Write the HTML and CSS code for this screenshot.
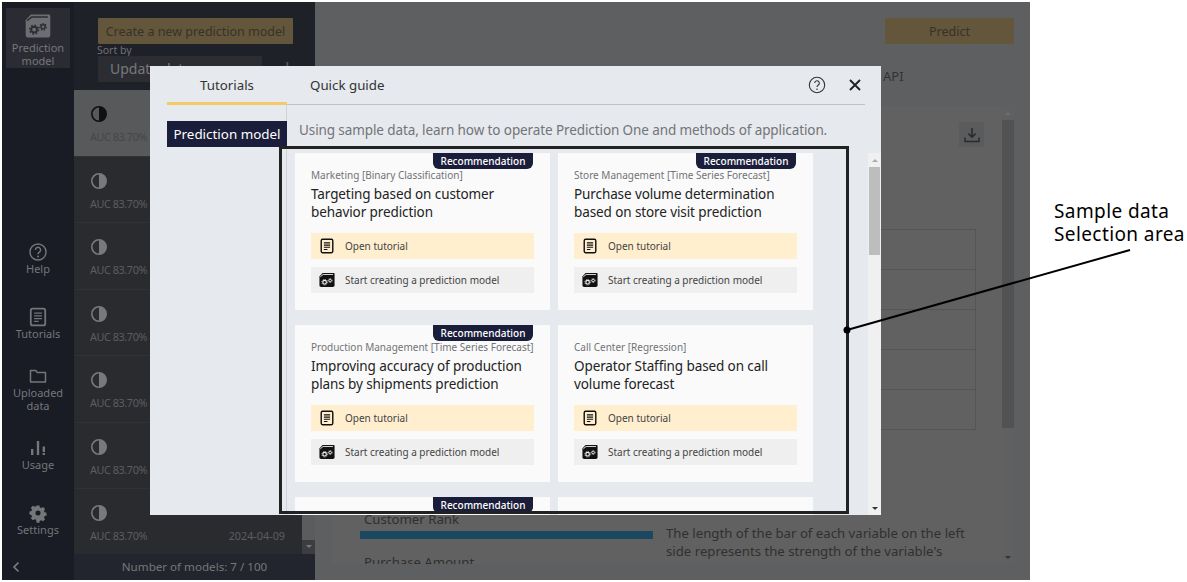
FILE: index.html
```html
<!DOCTYPE html>
<html lang="en">
<head>
<meta charset="utf-8" />
<meta name="viewport" content="width=device-width, initial-scale=1" />
<title>Prediction One</title>
<link rel="stylesheet" href="styles.css">
</head>
<body>
<svg class="sprites" width="0" height="0" aria-hidden="true">
  <symbol id="i-half" viewBox="0 0 18 18">
    <circle cx="9" cy="9" r="7.2" fill="none" stroke="currentColor" stroke-width="1.6"/>
    <path d="M9 1.8a7.2 7.2 0 0 1 0 14.4z" fill="currentColor"/>
  </symbol>
  <symbol id="i-doc" viewBox="0 0 18 18">
    <rect x="2.5" y="1.5" width="13" height="15" rx="1.5" fill="none" stroke="currentColor" stroke-width="1.6"/>
    <path d="M5.5 5.5h7M5.5 8h7M5.5 10.5h7M5.5 13h4" stroke="currentColor" stroke-width="1.2" fill="none"/>
  </symbol>
  <symbol id="i-box" viewBox="0 0 18 18">
    <path d="M4 1h12.5a1 1 0 0 1 1 1v13a2 2 0 0 1-2 2H2.5a2 2 0 0 1-2-2V5z" fill="currentColor"/>
    <path d="M1.5 5.4 4.6 2.800h11.2" fill="none" stroke="var(--box-line)" stroke-width="1"/>
    <circle cx="6.300" cy="11.500" r="2" fill="none" stroke="var(--box-line)" stroke-width="1.300"/>
    <circle cx="6.300" cy="11.500" r="3.100" fill="none" stroke="var(--box-line)" stroke-width="1" stroke-dasharray="1.200 1.200"/>
    <circle cx="12.500" cy="9.600" r="1.400" fill="none" stroke="var(--box-line)" stroke-width="1"/>
    <circle cx="12.500" cy="9.600" r="2.300" fill="none" stroke="var(--box-line)" stroke-width=".8" stroke-dasharray="1 1"/>
  </symbol>
</svg>

<div class="app">
  <nav class="sidebar">
    <a class="nav-item nav-active">
      <svg class="nav-box" width="26" height="26"><use href="#i-box"/></svg>
      <span>Prediction<br>model</span>
    </a>
    <a class="nav-item nav-help">
      <svg width="20" height="20" viewBox="0 0 20 20"><circle cx="10" cy="10" r="8" fill="none" stroke="currentColor" stroke-width="1.4"/><path d="M7.4 7.9a2.6 2.6 0 1 1 4 2.2c-.9.6-1.4 1-1.4 2.2" fill="none" stroke="currentColor" stroke-width="1.4"/><circle cx="10" cy="14.6" r="1" fill="currentColor"/></svg>
      <span>Help</span>
    </a>
    <a class="nav-item nav-far">
      <svg width="20" height="20"><use href="#i-doc"/></svg>
      <span>Tutorials</span>
    </a>
    <a class="nav-item">
      <svg width="20" height="20" viewBox="0 0 20 20"><path d="M2.5 16V4.5h5.2l1.6 2h8.2V16z" fill="none" stroke="currentColor" stroke-width="1.5" stroke-linejoin="round"/></svg>
      <span>Uploaded<br>data</span>
    </a>
    <a class="nav-item">
      <svg width="20" height="20" viewBox="0 0 20 20"><path d="M3 11h2.4v6H3zM8.8 3h2.4v14H8.8zM14.6 8.5H17V14h-2.4zM14.6 15h2.4v2h-2.4z" fill="currentColor"/></svg>
      <span>Usage</span>
    </a>
    <a class="nav-item nav-far">
      <svg width="20" height="20" viewBox="0 0 20 20"><path fill-rule="evenodd" d="M8.4 2h3.2l.5 2.3 1.5.7 2.1-1.2 2.2 2.3-1.2 2 .6 1.5 2.2.6v3.2l-2.2.5-.6 1.5 1.2 2.1-2.2 2.2-2.1-1.2-1.5.6-.5 2.3H8.4L7.9 18l-1.5-.6-2.1 1.2-2.2-2.2 1.2-2.1-.6-1.5L.5 12V8.8l2.2-.6.6-1.5-1.2-2 2.2-2.3 2.1 1.2 1.5-.7zM10 7.6a2.8 2.8 0 1 0 0 5.6 2.8 2.8 0 0 0 0-5.6z" fill="currentColor" transform="translate(1 .6) scale(.9)"/></svg>
      <span>Settings</span>
    </a>
    <svg class="nav-collapse" width="10" height="12" viewBox="0 0 10 12"><path d="M7.5 1.5 3 6l4.5 4.5" fill="none" stroke="currentColor" stroke-width="1.6"/></svg>
  </nav>

  <section class="models">
    <div class="models-top">
      <button class="btn-gold btn-create">Create a new prediction model</button>
      <label class="sort-label">Sort by</label>
      <div class="sort-row">
        <div class="sort-select">Update date</div>
        <svg class="sort-add" width="25" height="14" viewBox="0 0 25 14"><path d="M1 7h10v7H1zM14 8h5v6h-5zM18.500 2h1.800v5h4v1.800h-5.800z" fill="#55565a"/></svg>
      </div>
    </div>
    <div class="model-wrap">
      <ul class="model-list">
        <li class="model model-active"><svg width="18" height="18"><use href="#i-half"/></svg><div class="model-meta"><span class="model-auc">AUC 83.70%</span><span>2024-04-09</span></div></li>
        <li class="model"><svg width="18" height="18"><use href="#i-half"/></svg><div class="model-meta"><span class="model-auc">AUC 83.70%</span><span>2024-04-09</span></div></li>
        <li class="model"><svg width="18" height="18"><use href="#i-half"/></svg><div class="model-meta"><span class="model-auc">AUC 83.70%</span><span>2024-04-09</span></div></li>
        <li class="model"><svg width="18" height="18"><use href="#i-half"/></svg><div class="model-meta"><span class="model-auc">AUC 83.70%</span><span>2024-04-09</span></div></li>
        <li class="model"><svg width="18" height="18"><use href="#i-half"/></svg><div class="model-meta"><span class="model-auc">AUC 83.70%</span><span>2024-04-09</span></div></li>
        <li class="model"><svg width="18" height="18"><use href="#i-half"/></svg><div class="model-meta"><span class="model-auc">AUC 83.70%</span><span>2024-04-09</span></div></li>
        <li class="model"><svg width="18" height="18"><use href="#i-half"/></svg><div class="model-meta"><span class="model-auc">AUC 83.70%</span><span>2024-04-09</span></div></li>
      </ul>
      <div class="model-scroll"><i class="arrow-down"></i></div>
    </div>
    <div class="models-count">Number of models: 7 / 100</div>
  </section>

  <main class="detail">
    <div class="detail-top">
      <button class="btn-gold btn-predict">Predict</button>
    </div>
    <div class="detail-tabs">API</div>
    <div class="detail-row">
      <div class="panel">
        <div class="panel-tools">
          <span class="download">
            <svg width="18" height="18" viewBox="0 0 18 18"><path d="M9 2v9M5.4 7.6 9 11.2l3.6-3.6M2 11.5V15.500h14v-4" fill="none" stroke="#2a2a2a" stroke-width="1.5"/></svg>
          </span>
        </div>
        <div class="panel-table">
          <div></div><div></div><div></div><div></div><div></div>
        </div>
        <div class="chart">
          <div class="chart-bars">
            <div class="bar-name">Customer Rank</div>
            <div class="bar"></div>
            <div class="bar-name bar-next">Purchase Amount</div>
          </div>
          <p class="chart-note">The length of the bar of each variable on the left side represents the strength of the variable's influence (contribution) on the prediction result</p>
        </div>
      </div>
      <div class="panel-scroll"><i class="arrow-up"></i><i class="arrow-down"></i></div>
    </div>
  </main>
</div>

<div class="modal">
  <header class="modal-head">
    <div class="modal-tab modal-tab-on">Tutorials</div>
    <div class="modal-tab">Quick guide</div>
    <svg class="modal-help" width="18" height="18" viewBox="0 0 18 18"><circle cx="9" cy="9" r="7.700" fill="none" stroke="#333" stroke-width="1.100"/><path d="M6.700 7.100a2.300 2.300 0 1 1 3.600 1.900c-.9.600-1.300 1-1.300 2" fill="none" stroke="#333" stroke-width="1.100"/><circle cx="9" cy="13.200" r=".8" fill="#333"/></svg>
    <svg class="modal-close" width="14" height="14" viewBox="0 0 14 14"><path d="M2 2l10 10M12 2 2 12" stroke="#222" stroke-width="1.900" fill="none"/></svg>
  </header>
  <div class="modal-body">
    <aside class="modal-side">
      <div class="side-item">Prediction model</div>
    </aside>
    <div class="modal-main">
      <p class="modal-lead">Using sample data, learn how to operate Prediction One and methods of application.</p>
      <div class="sample-area">
        <div class="sample-grid">
          <article class="card">
            <span class="ribbon">Recommendation</span>
            <div class="card-cat">Marketing [Binary Classification]</div>
            <h3 class="card-title">Targeting based on customer behavior prediction</h3>
            <a class="card-btn card-btn-open"><svg width="16" height="16"><use href="#i-doc"/></svg>Open tutorial</a>
            <a class="card-btn"><svg class="card-box" width="16" height="16"><use href="#i-box"/></svg>Start creating a prediction model</a>
          </article>
          <article class="card">
            <span class="ribbon">Recommendation</span>
            <div class="card-cat">Store Management [Time Series Forecast]</div>
            <h3 class="card-title">Purchase volume determination based on store visit prediction</h3>
            <a class="card-btn card-btn-open"><svg width="16" height="16"><use href="#i-doc"/></svg>Open tutorial</a>
            <a class="card-btn"><svg class="card-box" width="16" height="16"><use href="#i-box"/></svg>Start creating a prediction model</a>
          </article>
          <article class="card">
            <span class="ribbon">Recommendation</span>
            <div class="card-cat">Production Management [Time Series Forecast]</div>
            <h3 class="card-title">Improving accuracy of production plans by shipments prediction</h3>
            <a class="card-btn card-btn-open"><svg width="16" height="16"><use href="#i-doc"/></svg>Open tutorial</a>
            <a class="card-btn"><svg class="card-box" width="16" height="16"><use href="#i-box"/></svg>Start creating a prediction model</a>
          </article>
          <article class="card">
            <div class="card-cat">Call Center [Regression]</div>
            <h3 class="card-title">Operator Staffing based on call volume forecast</h3>
            <a class="card-btn card-btn-open"><svg width="16" height="16"><use href="#i-doc"/></svg>Open tutorial</a>
            <a class="card-btn"><svg class="card-box" width="16" height="16"><use href="#i-box"/></svg>Start creating a prediction model</a>
          </article>
          <article class="card">
            <span class="ribbon">Recommendation</span>
          </article>
          <article class="card"></article>
        </div>
        <div class="sample-scroll">
          <i class="arrow-up"></i>
          <div class="sample-thumb"></div>
          <i class="arrow-down"></i>
        </div>
      </div>
    </div>
  </div>
  <div class="modal-frame"></div>
</div>

<svg class="callout-line" width="300" height="100" viewBox="0 0 300 100" aria-hidden="true">
  <line x1="7" y1="90" x2="290" y2="10" stroke="#000" stroke-width="2"/>
  <circle cx="7" cy="90" r="3.500" fill="#000"/>
</svg>
<div class="callout">Sample data<br>Selection area</div>
</body>
</html>
```
FILE: styles.css
```css
:root {
  --ui-font: "Noto Sans", "Open Sans", sans-serif;
  --navy: #1b1e3a;
  --gold-dim: #64563a;
  --box-line: #fafafa;
}
* {
  box-sizing: border-box;
}
html, body {
  height: 100%;
}
body {
  margin: 0;
  background: #fff;
  font-family: var(--ui-font);
  overflow: hidden;
  position: relative;
}
ul {
  margin: 0;
  padding: 0;
  list-style: none;
}
.sprites {
  position: absolute;
}

/* app behind the dim */
.app {
  display: flex;
  width: 1028px;
  height: 578px;
  margin: 2px 0 0 2px;
  background: #5e5f61;
  overflow: hidden;
}
.sidebar {
  width: 72px;
  flex: none;
  background: #191b25;
  display: flex;
  flex-direction: column;
  align-items: center;
  color: #75767a;
  font-size: 11px;
  line-height: 13px;
  padding-top: 6px;
  position: relative;
}
.nav-item {
  display: flex;
  flex-direction: column;
  align-items: center;
  text-align: center;
  margin-top: 26px;
}
.nav-far {
  margin-top: 32px;
}
.nav-active {
  margin-top: 0;
  width: 64px;
  height: 60px;
  background: #2b2c33;
  padding-top: 5px;
}
.nav-box {
  --box-line: #2b2c33;
  color: #6d6e72;
  margin-bottom: 2px;
}
.nav-help {
  margin-top: 174px;
}
.nav-collapse {
  position: absolute;
  left: 9px;
  bottom: 7px;
  color: #7d7e82;
}
.models {
  width: 241px;
  flex: none;
  display: flex;
  flex-direction: column;
  background: #1f2129;
}
.models-top {
  height: 88px;
  padding: 16px 22px 0 24px;
}
.btn-gold {
  display: block;
  height: 26px;
  border: none;
  border-radius: 1px;
  background: var(--gold-dim);
  color: #35332c;
  font: 12.500px var(--ui-font);
  padding: 0;
}
.btn-create {
  width: 195px;
}
.sort-label {
  display: block;
  margin-left: -1px;
  color: #6f7073;
  font-size: 10.500px;
  line-height: 12px;
}
.sort-row {
  display: flex;
  align-items: flex-start;
}
.sort-select {
  width: 164px;
  height: 26px;
  background: #2c2d33;
  color: #77787b;
  font-size: 14px;
  line-height: 26px;
  padding-left: 12px;
}
.sort-add {
  margin: 4px 0 0 6px;
}
.model-wrap {
  flex: 1;
  display: flex;
  min-height: 0;
  overflow: hidden;
}
.model-list {
  flex: 1;
}
.model {
  height: 66.500px;
  padding: 15px 17px 0 16px;
  background: #2a2b2f;
  border-bottom: 1px solid #313236;
  color: #78797c;
}
.model svg {
  display: block;
}
.model-active {
  background: #58595b;
  color: #111;
}
.model-meta {
  display: flex;
  justify-content: space-between;
  margin-top: 7px;
  font-size: 10.800px;
  line-height: 14px;
  color: #5c5d60;
}
.model-auc {
  letter-spacing: -.4px;
}
.model-active .model-meta {
  color: #45464a;
}
.model-scroll {
  width: 13px;
  background: #5b5c5e;
  position: relative;
}
.model-scroll::after {
  content: "";
  position: absolute;
  left: 0;
  right: 0;
  bottom: 0;
  height: 14px;
  background: #3c3d40;
}
.model-scroll .arrow-down {
  border-top-color: #77787b;
  bottom: 6px;
  z-index: 1;
}
.models-count {
  height: 26px;
  background: #22252d;
  color: #76777a;
  font-size: 11.600px;
  line-height: 25px;
  text-align: center;
}
.arrow-up,
.arrow-down {
  position: absolute;
  left: 50%;
  margin-left: -3px;
  width: 0;
  height: 0;
  border-left: 3px solid transparent;
  border-right: 3px solid transparent;
}
.arrow-up {
  top: 6px;
  border-bottom: 3px solid #aaa;
}
.arrow-down {
  bottom: 5px;
  border-top: 3px solid #333;
}

/* right part */
.detail {
  flex: 1;
  min-width: 0;
  display: flex;
  flex-direction: column;
}
.detail-top {
  height: 52px;
  padding: 16px 16px 0 0;
  display: flex;
  justify-content: flex-end;
}
.btn-predict {
  width: 129px;
}
.detail-tabs {
  height: 52px;
  padding: 12px 0 0 568px;
  color: #333;
  font-size: 13px;
  line-height: 20px;
}
.detail-row {
  height: 458px;
  display: flex;
  padding: 0 16px 0 17px;
}
.panel {
  flex: 1;
  min-width: 0;
  background: #616161;
  overflow: hidden;
}
.panel-tools {
  display: flex;
  justify-content: flex-end;
  padding: 16px 18px 0 0;
}
.download {
  width: 25px;
  height: 25px;
  background: #5a5b5d;
  display: flex;
  align-items: center;
  justify-content: center;
}
.panel-table {
  width: 355px;
  margin: 82px 0 0 289px;
  border: 1px solid #555;
  border-bottom: none;
}
.panel-table div {
  height: 40px;
  border-bottom: 1px solid #555;
}
.chart {
  display: flex;
  margin: 80px 0 0 28px;
}
.chart-bars {
  width: 293px;
  flex: none;
  color: #2f2f2f;
  font-size: 13.200px;
  line-height: 18px;
}
.bar-name {
  padding-left: 4px;
}
.bar {
  height: 8px;
  margin-top: 3px;
  background: #1b4860;
}
.bar-next {
  margin-top: 14px;
}
.chart-note {
  margin: 14px 0 0 13px;
  width: 306px;
  color: #303030;
  font-size: 13.200px;
  line-height: 18px;
}
.panel-scroll {
  width: 12px;
  background: #606062;
  position: relative;
}
.panel-scroll::before {
  content: "";
  position: absolute;
  top: 14px;
  left: 0;
  right: 0;
  height: 308px;
  background: #525252;
}
.panel-scroll .arrow-up {
  border-bottom-color: #6e6f71;
}

/* modal */
.modal {
  position: absolute;
  left: 150px;
  top: 66px;
  width: 731px;
  height: 449px;
  background: #e6e9ee;
  display: flex;
  flex-direction: column;
  color: #222;
}
.modal-head {
  height: 39px;
  margin: 0 16px 0 17px;
  border-bottom: 1px solid #bfc2c7;
  display: flex;
  align-items: center;
  flex: none;
}
.modal-tab {
  height: 39px;
  font-size: 13.300px;
  line-height: 38px;
  color: #333;
  text-align: center;
  margin-bottom: -1px;
}
.modal-tab-on {
  width: 120px;
  border-bottom: 3px solid #f4ca68;
  margin-right: 23px;
}
.modal-help {
  margin-left: auto;
  margin-right: 22px;
}
.modal-close {
  margin-right: 3px;
}
.modal-body {
  flex: 1;
  display: flex;
  min-height: 0;
}
.modal-side {
  width: 137px;
  flex: none;
  padding: 16px 0 0 17px;
  border-right: 1px solid #cfd2d7;
}
.side-item {
  height: 26px;
  width: 120px;
  background: var(--navy);
  color: #fff;
  font-size: 13.400px;
  line-height: 26px;
  text-align: center;
  position: relative;
}
.modal-main {
  flex: 1;
  min-width: 0;
  display: flex;
  flex-direction: column;
}
.modal-lead {
  height: 48px;
  flex: none;
  margin: 0;
  padding: 14px 0 0 12px;
  color: #737477;
  font-size: 13.500px;
  letter-spacing: -.1px;
  line-height: 22px;
}
.sample-area {
  flex: 1;
  display: flex;
  min-height: 0;
  overflow: hidden;
}
.sample-grid {
  flex: 1;
  display: grid;
  grid-template-columns: 255px 255px;
  grid-auto-rows: 157px;
  gap: 15px 8px;
  padding-left: 8px;
}
.sample-scroll {
  width: 13px;
  flex: none;
  background: #f0f0f0;
  position: relative;
}
.sample-thumb {
  margin: 14px 1px 0;
  height: 88px;
  background: #bdbdbd;
}
.card {
  background: #fafafa;
  padding: 15px 16px 0;
  position: relative;
}
.ribbon {
  position: absolute;
  top: 0;
  right: 17px;
  width: 100px;
  height: 16px;
  background: var(--navy);
  border-radius: 0 0 6px 6px;
  color: #fff;
  font-size: 10px;
  font-weight: 500;
  line-height: 16px;
  text-align: center;
}
.card-cat {
  color: #727377;
  font-size: 10px;
  line-height: 14px;
  white-space: nowrap;
}
.card-title {
  margin: 3px 0 12px;
  font-size: 13.500px;
  font-weight: 400;
  letter-spacing: -.1px;
  line-height: 18px;
  color: #222;
}
.card-btn {
  display: flex;
  align-items: center;
  gap: 10px;
  height: 26px;
  margin-bottom: 8px;
  padding: 0 0 0 8px;
  background: #efefef;
  color: #444;
  font-size: 10px;
  line-height: 25px;
}
.card-btn-open {
  background: #ffefcf;
}
.card-btn svg {
  color: #111;
  flex: none;
}
.card-box {
  --box-line: #efefef;
}
.modal-frame {
  position: absolute;
  left: 129px;
  top: 80px;
  width: 570px;
  height: 368px;
  border: 3px solid #222;
  pointer-events: none;
}

/* annotation on the screenshot */
.callout-line {
  position: absolute;
  left: 840px;
  top: 240px;
}
.callout {
  position: absolute;
  left: 1054px;
  top: 200px;
  color: #000;
  font-size: 19px;
  line-height: 23px;
  letter-spacing: .4px;
}
```
